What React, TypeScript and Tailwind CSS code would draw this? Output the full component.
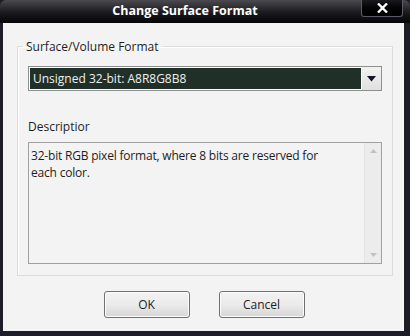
import React from "react";

const font = { fontFamily: '"Open Sans", "Noto Sans", sans-serif' };

export default function App() {
  return (
    <div
      className="w-[410px] h-[336px] bg-[#1d1d27] flex flex-col overflow-hidden"
      style={font}
    >
      {/* title bar */}
      <div className="relative h-[23px] shrink-0 bg-gradient-to-b from-[#4a4a50] via-[#1e1e22] to-[#050507] rounded-t-[6px] flex items-center justify-center pr-[40px]">
        <span className="text-white font-bold text-[12.5px] leading-none">
          Change Surface Format
        </span>
        <div className="absolute right-[7px] top-0 w-[42px] h-[17px] border border-t-0 border-[#5a5a66] rounded-b-[3px] bg-gradient-to-b from-[#1a1a1e] to-[#000000] flex items-center justify-center">
          <svg width="11" height="10" viewBox="0 0 11 10">
            <path d="M1 0.5 L10 9.5 M10 0.5 L1 9.5" stroke="#ffffff" strokeWidth="2.4" />
          </svg>
        </div>
      </div>

      {/* client area */}
      <div className="flex-1 ml-[3px] mr-[6px] mb-[5px] bg-[#f3f3f3] border-r border-[#fafafa] flex flex-col">
        <fieldset className="mt-[16px] ml-[14px] mr-[10px] border border-[#dcdcdc] shadow-[inset_1px_1px_0_#ffffff] px-[10px] pt-0 pb-[11px]">
          <legend className="ml-[-5px] px-[3px] text-[12px] text-[#1e1e1e] leading-[15px]">
            Surface/Volume Format
          </legend>

          <div className="mt-[12px] h-[25px] border border-[#8e8f8f] bg-white flex">
            <div className="flex-1 m-[1px] bg-[#203028] text-[#eef0ee] text-[12px] leading-none flex items-center pl-[3px]">
              Unsigned 32-bit: A8R8G8B8
            </div>
            <div className="w-[19px] bg-gradient-to-b from-[#f2f2f2] to-[#e0e0e0] flex items-center justify-center">
              <svg width="9" height="6" viewBox="0 0 9 6">
                <path d="M0 0 H9 L4.5 5.5 Z" fill="#141428" />
              </svg>
            </div>
          </div>

          <div className="mt-[28px] text-[12px] text-[#1e1e1e] leading-[15px]">
            Descriptior
          </div>

          <div className="mt-[8px] h-[122px] border border-[#a0a0a0] bg-[#f3f3f3] flex">
            <div className="flex-1 pl-[2px] pr-[24px] pt-[4px] text-[12px] leading-[17px] tracking-[-0.2px] text-[#1e1e1e]">
              32-bit RGB pixel format, where 8 bits are reserved for each color.
            </div>
            <div className="w-[17px] bg-[#ececec] border-l border-[#e4e4e4] flex flex-col justify-between items-center py-[6px]">
              <svg width="7" height="4" viewBox="0 0 7 4">
                <path d="M0 4 H7 L3.5 0 Z" fill="#c2c2c2" />
              </svg>
              <svg width="7" height="4" viewBox="0 0 7 4">
                <path d="M0 0 H7 L3.5 4 Z" fill="#c2c2c2" />
              </svg>
            </div>
          </div>
        </fieldset>

        <div className="mt-[15px] flex justify-center gap-[29px] pl-[2px]">
          <button className="w-[86px] h-[27px] border border-[#707070] rounded-[3px] bg-gradient-to-b from-[#f2f2f2] via-[#ebebeb] to-[#d6d6d6] shadow-[inset_0_0_0_1px_#fcfcfc] text-[12px] text-[#1e1e1e]">
            OK
          </button>
          <button className="w-[86px] h-[27px] border border-[#707070] rounded-[3px] bg-gradient-to-b from-[#f2f2f2] via-[#ebebeb] to-[#d6d6d6] shadow-[inset_0_0_0_1px_#fcfcfc] text-[12px] text-[#1e1e1e]">
            Cancel
          </button>
        </div>
      </div>
    </div>
  );
}
